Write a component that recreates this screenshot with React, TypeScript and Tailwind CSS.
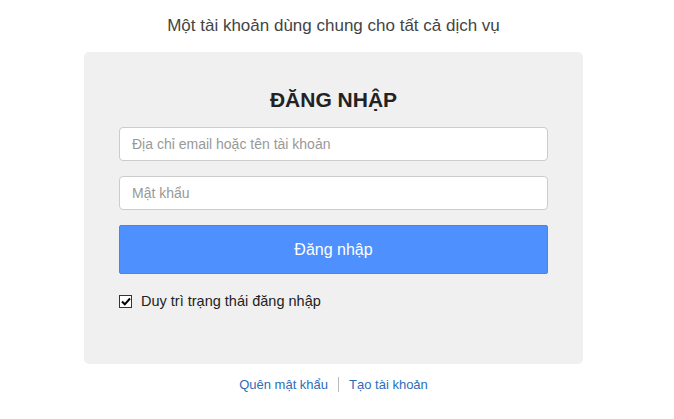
import React from 'react';

// Trang đăng nhập
const App: React.FC = () => {
  return (
    <div className="min-h-screen bg-white font-['Liberation_Sans',Arial,sans-serif]">
      <div className="w-[667px] flex flex-col items-center pt-[16px]">
        <p className="text-[17px] leading-[20px] text-[#444]">
          Một tài khoản dùng chung cho tất cả dịch vụ
        </p>

        <div className="mt-[16px] w-[499px] rounded-[5px] bg-[#f0f0f0] px-[35px] pt-[34px] pb-[51px]">
          <h1 className="text-center text-[21px] leading-[28px] font-bold text-[#222]">
            ĐĂNG NHẬP
          </h1>

          <div className="mt-[13px] flex flex-col gap-[15px]">
            <input
              className="h-[34px] w-full rounded-[4px] border border-[#ccc] bg-white px-[12px] text-[14px] text-[#333] placeholder:text-[#999] outline-none"
              placeholder="Địa chỉ email hoặc tên tài khoản"
            />
            <input
              type="password"
              className="h-[34px] w-full rounded-[4px] border border-[#ccc] bg-white px-[12px] text-[14px] text-[#333] placeholder:text-[#999] outline-none"
              placeholder="Mật khẩu"
            />
          </div>

          <button className="mt-[15px] h-[49px] w-full rounded-[2px] border border-[#4285f4] bg-[#4d90fe] text-[16px] text-white">
            Đăng nhập
          </button>

          <label className="mt-[17px] flex items-center gap-[9px] text-[14.5px] text-[#222]">
            <span className="flex h-[13px] w-[13px] items-center justify-center border border-[#333] bg-white">
              <svg width="10" height="9" viewBox="0 0 10 9">
                <path d="M1 4.5 L3.8 7.3 L9 1.5" fill="none" stroke="#000" strokeWidth="2" />
              </svg>
            </span>
            Duy trì trạng thái đăng nhập
          </label>
        </div>

        <div className="mt-[12px] flex items-center text-[13px] leading-[18px] text-[#2a6ebb]">
          <a href="#">Quên mật khẩu</a>
          <span className="mx-[10px] h-[15px] w-px bg-[#bbb]" />
          <a href="#">Tạo tài khoản</a>
        </div>
      </div>
    </div>
  );
};

export default App;
